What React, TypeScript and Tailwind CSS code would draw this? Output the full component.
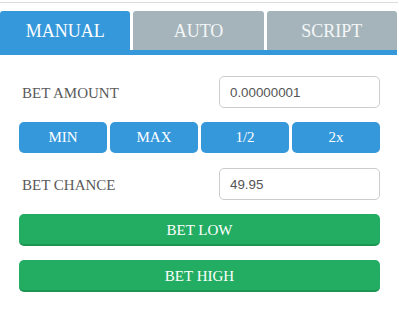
import React, { useState } from 'react';

const tabs = ['MANUAL', 'AUTO', 'SCRIPT'];
const quick = ['MIN', 'MAX', '1/2', '2x'];

const App: React.FC = () => {
    const [active, setActive] = useState(0);
    const [amount, setAmount] = useState('0.00000001');
    const [chance, setChance] = useState('49.95');

    return (
        <div className="w-[399px] h-[333px] bg-white pt-[2px]" style={{ fontFamily: '"Liberation Serif", serif' }}>
            {/* top rule */}
            <div className="w-[398px] h-px bg-[#dddddd]" />

            {/* Tabs */}
            <div className="w-[397px] mt-[8px]">
                <div className="grid grid-cols-3 gap-[3px]">
                    {tabs.map((t, i) => (
                        <button
                            key={t}
                            onClick={() => setActive(i)}
                            className={`h-[39px] rounded-t-[3px] text-[18px] leading-none ${
                                active === i ? 'bg-[#3498db] text-white' : 'bg-[#a5b4ba] text-[#f4f7f8]'
                            }`}
                        >
                            {t}
                        </button>
                    ))}
                </div>
                <div className="h-[5px] bg-[#3498db]" />
            </div>

            {/* Form */}
            <div className="w-[397px] pl-[19px] pr-[17px] pt-[21px] flex flex-col">
                <div className="flex items-center justify-between">
                    <span className="pl-[3px] pt-[2px] text-[15px] text-[#5a5a5a]">BET AMOUNT</span>
                    <input
                        value={amount}
                        onChange={(e) => setAmount(e.target.value)}
                        className="w-[161px] h-[32px] rounded-[5px] border border-[#cccccc] px-[10px] text-[13.333px] text-[#555555] outline-none"
                        style={{ fontFamily: '"Liberation Sans", Arial, sans-serif' }}
                    />
                </div>

                <div className="grid grid-cols-4 gap-[3px] mt-[14px]">
                    {quick.map((q) => (
                        <button
                            key={q}
                            className="h-[31px] rounded-[5px] bg-[#3498db] text-white text-[15px] leading-none"
                        >
                            {q}
                        </button>
                    ))}
                </div>

                <div className="flex items-center justify-between mt-[15px]">
                    <span className="pl-[3px] pt-[2px] text-[15px] text-[#5a5a5a]">BET CHANCE</span>
                    <input
                        value={chance}
                        onChange={(e) => setChance(e.target.value)}
                        className="w-[161px] h-[32px] rounded-[5px] border border-[#cccccc] px-[10px] text-[13.333px] text-[#555555] outline-none"
                        style={{ fontFamily: '"Liberation Sans", Arial, sans-serif' }}
                    />
                </div>

                <button className="mt-[14px] h-[32px] rounded-[5px] bg-[#23ad63] border-b-[2px] border-[#1c9553] pt-[2px] text-white text-[15px] leading-none">
                    BET LOW
                </button>
                <button className="mt-[14px] h-[32px] rounded-[5px] bg-[#23ad63] border-b-[2px] border-[#1c9553] pt-[2px] text-white text-[15px] leading-none">
                    BET HIGH
                </button>
            </div>
        </div>
    );
};

export default App;
